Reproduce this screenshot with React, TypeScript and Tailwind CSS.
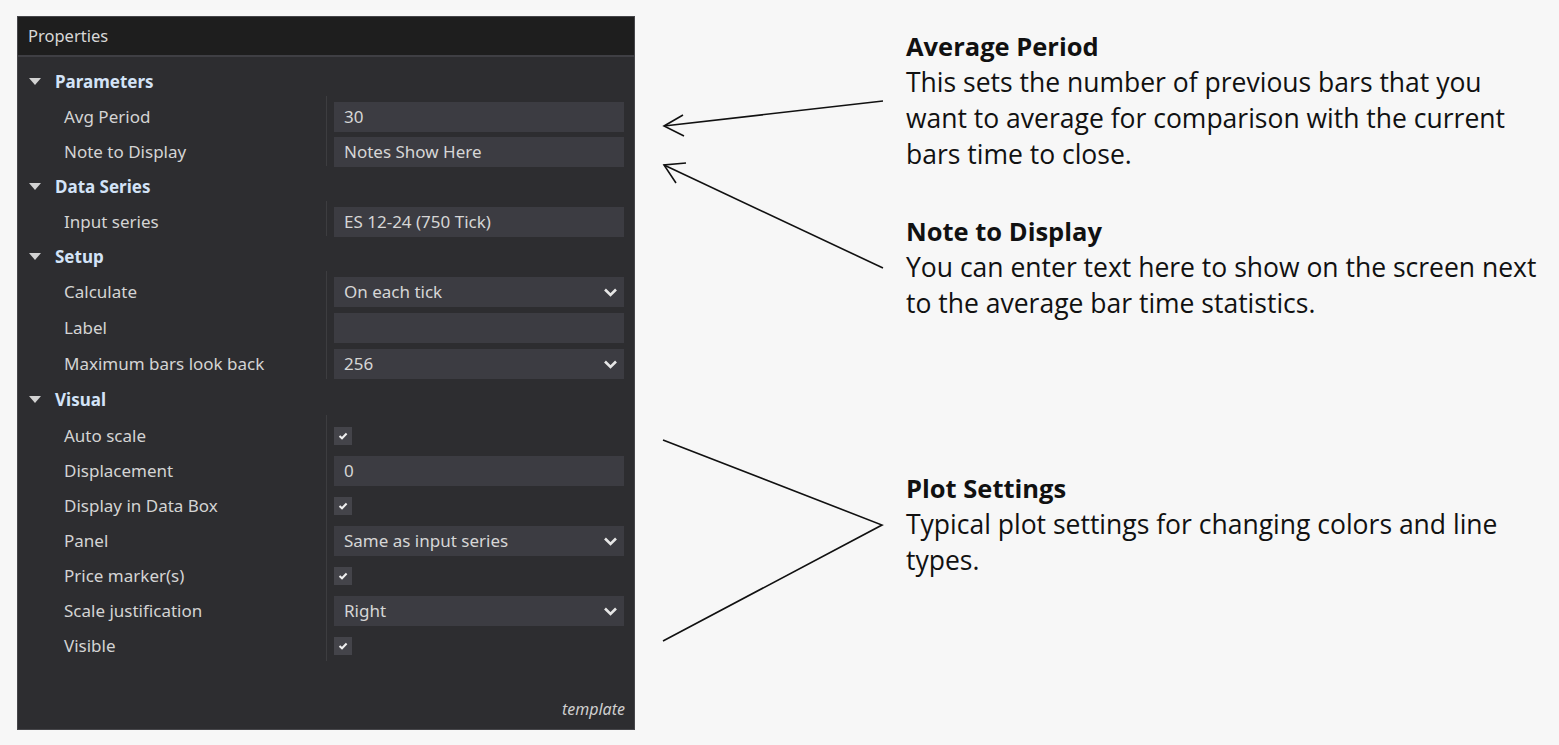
import type { ReactNode } from "react";

type Row =
  | { kind: "text"; label: string; value: string; h: number }
  | { kind: "select"; label: string; value: string; h: number }
  | { kind: "check"; label: string; h: number };

type Group = { label: string; h: number; rows: Row[] };

const groups: Group[] = [
  {
    label: "Parameters",
    h: 35,
    rows: [
      { kind: "text", label: "Avg Period", value: "30", h: 35 },
      { kind: "text", label: "Note to Display", value: "Notes Show Here", h: 35 },
    ],
  },
  {
    label: "Data Series",
    h: 35,
    rows: [{ kind: "text", label: "Input series", value: "ES 12-24 (750 Tick)", h: 35 }],
  },
  {
    label: "Setup",
    h: 35,
    rows: [
      { kind: "select", label: "Calculate", value: "On each tick", h: 36 },
      { kind: "text", label: "Label", value: "", h: 36 },
      { kind: "select", label: "Maximum bars look back", value: "256", h: 36 },
    ],
  },
  {
    label: "Visual",
    h: 36,
    rows: [
      { kind: "check", label: "Auto scale", h: 35 },
      { kind: "text", label: "Displacement", value: "0", h: 35 },
      { kind: "check", label: "Display in Data Box", h: 35 },
      { kind: "select", label: "Panel", value: "Same as input series", h: 35 },
      { kind: "check", label: "Price marker(s)", h: 35 },
      { kind: "select", label: "Scale justification", value: "Right", h: 35 },
      { kind: "check", label: "Visible", h: 36 },
    ],
  },
];

function Chevron() {
  return (
    <svg width="15" height="10" viewBox="0 0 15 10" className="shrink-0">
      <path d="M2 2.5 L7.5 8 L13 2.5" fill="none" stroke="#e6e6e6" strokeWidth="2.6" />
    </svg>
  );
}

function Field({ children }: { children?: ReactNode }) {
  return (
    <div className="flex h-[30px] w-[290px] items-center justify-between bg-[#3c3c42] pl-[10px] pr-[6px] text-[#d6d6d6]">
      {children}
    </div>
  );
}

function Value({ row }: { row: Row }) {
  if (row.kind === "text") {
    return (
      <Field>
        <span>{row.value}</span>
      </Field>
    );
  }
  if (row.kind === "select") {
    return (
      <Field>
        <span>{row.value}</span>
        <Chevron />
      </Field>
    );
  }
  return (
    <div className="flex h-[18px] w-[18px] items-center justify-center bg-[#44444a]">
      <svg width="10" height="8" viewBox="0 0 10 8">
        <path d="M1.5 4 L4 6.3 L8.6 1.5" fill="none" stroke="#f0f0f0" strokeWidth="2" />
      </svg>
    </div>
  );
}

function PropertyGroup({ group }: { group: Group }) {
  return (
    <div>
      <div className="flex items-center" style={{ height: group.h }}>
        <svg width="12" height="8" viewBox="0 0 12 8" className="ml-[11px]">
          <path d="M0 0 H12 L6 7 Z" fill="#d2d2d2" />
        </svg>
        <span className="ml-[14px] font-bold text-[#d3e3f7]">{group.label}</span>
      </div>
      <div className="relative">
        <div className="absolute bottom-[3px] left-[308px] top-[-3px] w-px bg-[#3d3d40]" />
        {group.rows.map((row) => (
          <div key={row.label} className="flex items-center" style={{ height: row.h }}>
            <span className="w-[270px] whitespace-nowrap pl-[46px] text-[#d4d4d4]">{row.label}</span>
            <div className="ml-[46px]">
              <Value row={row} />
            </div>
          </div>
        ))}
      </div>
    </div>
  );
}

function Note({ title, lines, className }: { title: string; lines: string[]; className?: string }) {
  return (
    <div className={className}>
      <div className="text-[25.5px] font-bold">{title}</div>
      {lines.map((l) => (
        <div key={l} className="whitespace-nowrap">
          {l}
        </div>
      ))}
    </div>
  );
}

export default function App() {
  return (
    <div className="relative h-[745px] w-[1559px] overflow-hidden bg-[#f7f7f7]">
      <div className="flex pl-[17px] pt-[16px]">
        <div
          className="flex h-[714px] w-[618px] shrink-0 flex-col border border-[#46464a] bg-[#2d2d30] text-[17px]"
          style={{ fontFamily: '"Noto Sans", "Open Sans", sans-serif' }}
        >
          <div className="flex h-[40px] items-center border-b-2 border-[#3f3f44] bg-[#1e1e1e] pl-[10px] text-[16.5px] text-[#d8d8d8]">
            Properties
          </div>
          <div className="flex-1 pt-[7px]">
            {groups.map((g) => (
              <PropertyGroup key={g.label} group={g} />
            ))}
          </div>
          <div className="flex h-[40px] items-center justify-end pr-[9px] text-[16px] italic text-[#cfcfcf]">
            template
          </div>
        </div>

        <div
          className="ml-[271px] pt-[12px] text-[26.5px] leading-[36px] text-[#111]"
          style={{ fontFamily: '"Open Sans", Lato, sans-serif' }}
        >
          <Note
            title="Average Period"
            lines={[
              "This sets the number of previous bars that you",
              "want to average for comparison with the current",
              "bars time to close.",
            ]}
          />
          <Note
            className="mt-[41px]"
            title="Note to Display"
            lines={[
              "You can enter text here to show on the screen next",
              "to the average bar time statistics.",
            ]}
          />
          <Note
            className="mt-[149px]"
            title="Plot Settings"
            lines={["Typical plot settings for changing colors and line", "types."]}
          />
        </div>
      </div>

      <svg className="pointer-events-none absolute left-0 top-0" width="1559" height="745">
        <g fill="none" stroke="#111" strokeWidth="1.6">
          <path d="M883 101 L664 126" />
          <path d="M683 115 L664 126 L684 136" />
          <path d="M883 268 L664 165" />
          <path d="M686 163 L664 165 L676 183" />
          <path d="M663 440 L882 525 L663 641" />
        </g>
      </svg>
    </div>
  );
}
